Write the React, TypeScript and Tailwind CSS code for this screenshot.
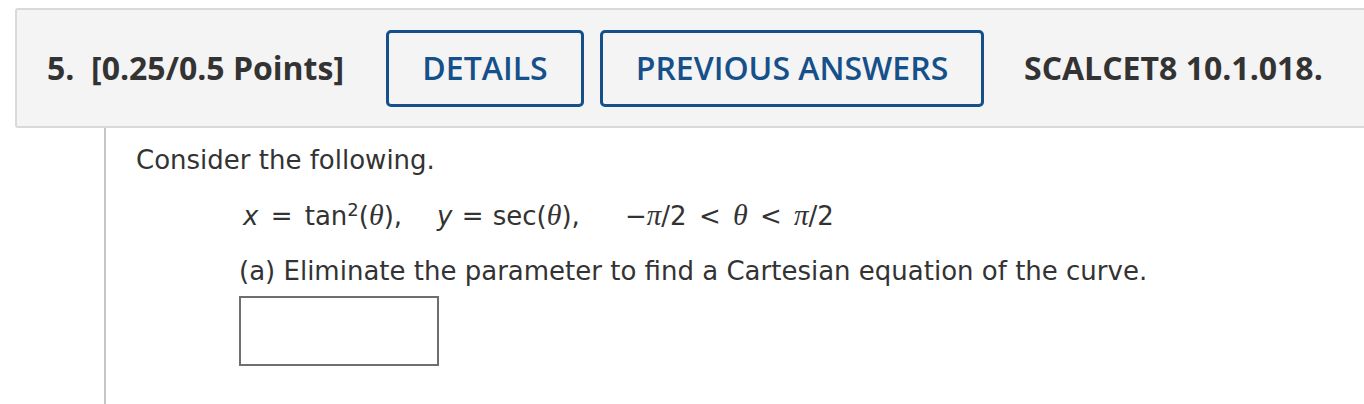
import React from "react";

function Theta() {
  return (
    <span className="italic font-['Liberation_Serif',serif] text-[30px]">θ</span>
  );
}
function Pi() {
  return (
    <span className="italic font-['Liberation_Serif',serif] text-[29px]">π</span>
  );
}

export default function App() {
  return (
    <div className="w-[1364px] h-[404px] overflow-hidden bg-white text-[#333333]">
      <div className="pt-[8px] pl-[15px]">
        <div className="flex items-center h-[120px] w-[1400px] border-2 border-[#d9d9d9] rounded-[3px] bg-[#f4f4f4] pl-[30px] font-['Open_Sans',sans-serif] text-[32px]">
          <div className="w-[300px] font-bold whitespace-pre">5.  [0.25/0.5 Points]</div>
          <div className="ml-[39px] flex gap-[16px]">
            <div className="w-[198px] h-[77px] flex items-center justify-center border-[3px] border-[#15508a] rounded-[5px] text-[#15508a] font-semibold">
              DETAILS
            </div>
            <div className="w-[384px] h-[77px] flex items-center justify-center border-[3px] border-[#15508a] rounded-[5px] text-[#15508a] font-semibold">
              PREVIOUS ANSWERS
            </div>
          </div>
          <div className="ml-[40px] font-bold">SCALCET8 10.1.018.</div>
        </div>
      </div>
      <div className="ml-[104px] h-[277px] border-l-2 border-[#c6c6c6] pl-[30px] pt-[15px] font-['DejaVu_Sans','Verdana',sans-serif] text-[26px] text-[#333333]">
        <p className="leading-[34px]">Consider the following.</p>
        <div className="pl-[103px] pt-[21px]">
          <div className="pl-[4px] flex items-baseline leading-[34px] whitespace-pre">
            <span className="w-[194px] [word-spacing:4px]">
              <span className="italic">x</span> = tan<sup className="text-[18px]">2</sup>(<Theta />),
            </span>
            <span className="w-[188px] [word-spacing:1px]">
              <span className="italic">y</span> = sec(<Theta />),
            </span>
            <span className="[word-spacing:4px]">
              −<Pi />/2 &lt; <Theta /> &lt; <Pi />/2
            </span>
          </div>
          <p className="leading-[34px] pt-[21px]">(a) Eliminate the parameter to find a Cartesian equation of the curve.</p>
          <div className="mt-[8px] w-[200px] h-[70px] border-2 border-[#6f6f6f] bg-white" />
        </div>
      </div>
    </div>
  );
}
